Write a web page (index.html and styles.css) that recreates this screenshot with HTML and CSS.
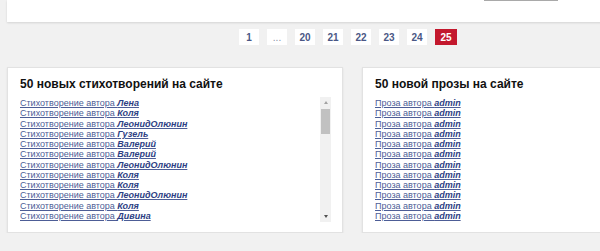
FILE: index.html
```html
<!DOCTYPE html>
<html lang="ru">
<head>
    <meta charset="UTF-8">
    <meta name="viewport" content="width=device-width, initial-scale=1.0">
    <title>Новые произведения</title>
    <link rel="stylesheet" href="styles.css">
</head>
<body>
    <div class="page">
        <div class="top-card">
            <span class="top-button"></span>
        </div>

        <div class="pager">
            <a href="#" class="page-link">1</a>
            <span class="page-link dots">...</span>
            <a href="#" class="page-link">20</a>
            <a href="#" class="page-link">21</a>
            <a href="#" class="page-link">22</a>
            <a href="#" class="page-link">23</a>
            <a href="#" class="page-link">24</a>
            <span class="page-link current">25</span>
        </div>

        <div class="columns">
            <div class="card">
                <h2>50 новых стихотворений на сайте</h2>
                <div class="list-wrap">
                    <ul class="list">
                        <li><a href="#">Стихотворение автора <b>Лена</b></a></li>
                        <li><a href="#">Стихотворение автора <b>Коля</b></a></li>
                        <li><a href="#">Стихотворение автора <b>ЛеонидОлюнин</b></a></li>
                        <li><a href="#">Стихотворение автора <b>Гузель</b></a></li>
                        <li><a href="#">Стихотворение автора <b>Валерий</b></a></li>
                        <li><a href="#">Стихотворение автора <b>Валерий</b></a></li>
                        <li><a href="#">Стихотворение автора <b>ЛеонидОлюнин</b></a></li>
                        <li><a href="#">Стихотворение автора <b>Коля</b></a></li>
                        <li><a href="#">Стихотворение автора <b>Коля</b></a></li>
                        <li><a href="#">Стихотворение автора <b>ЛеонидОлюнин</b></a></li>
                        <li><a href="#">Стихотворение автора <b>Коля</b></a></li>
                        <li><a href="#">Стихотворение автора <b>Дивина</b></a></li>
                    </ul>
                    <div class="scrollbar">
                        <span class="arrow up"></span>
                        <span class="thumb"></span>
                        <span class="track"></span>
                        <span class="arrow down"></span>
                    </div>
                </div>
            </div>

            <div class="card">
                <h2>50 новой прозы на сайте</h2>
                <div class="list-wrap">
                    <ul class="list">
                        <li><a href="#">Проза автора <b>admin</b></a></li>
                        <li><a href="#">Проза автора <b>admin</b></a></li>
                        <li><a href="#">Проза автора <b>admin</b></a></li>
                        <li><a href="#">Проза автора <b>admin</b></a></li>
                        <li><a href="#">Проза автора <b>admin</b></a></li>
                        <li><a href="#">Проза автора <b>admin</b></a></li>
                        <li><a href="#">Проза автора <b>admin</b></a></li>
                        <li><a href="#">Проза автора <b>admin</b></a></li>
                        <li><a href="#">Проза автора <b>admin</b></a></li>
                        <li><a href="#">Проза автора <b>admin</b></a></li>
                        <li><a href="#">Проза автора <b>admin</b></a></li>
                        <li><a href="#">Проза автора <b>admin</b></a></li>
                    </ul>
                </div>
            </div>
        </div>
    </div>
</body>
</html>
```

FILE: styles.css
```css
body {
    margin: 0;
    background-color: #f1f1f1;
    font-family: 'Liberation Sans', Arial, sans-serif;
    overflow: hidden;
}
.page {
    width: 691px;
    padding-left: 7px;
}
.top-card {
    height: 22px;
    background: white;
    box-shadow: 0 1px 2px rgba(0, 0, 0, 0.12);
}
.top-button {
    display: block;
    margin-left: 477px;
    width: 74px;
    height: 1px;
    background-color: #a9a9a9;
}
.pager {
    display: flex;
    gap: 8px;
    margin: 7px 0 0 232px;
    height: 16px;
}
.page-link {
    display: flex;
    align-items: center;
    justify-content: center;
    min-width: 18px;
    height: 16px;
    padding: 0 1px;
    background: white;
    color: #4a5785;
    font-size: 10px;
    font-weight: bold;
    text-decoration: none;
}
.page-link.dots {
    color: #8a8fa8;
    font-weight: normal;
}
.page-link.current {
    background-color: #c3182d;
    color: white;
    min-width: 20px;
}
.columns {
    display: flex;
    gap: 19px;
    margin-top: 22px;
}
.card {
    width: 336px;
    height: 166px;
    box-sizing: border-box;
    background: white;
    border: 1px solid #e2e2e2;
    box-shadow: 0 1px 2px rgba(0, 0, 0, 0.08);
    padding: 9px 11px 0 12px;
}
.card h2 {
    margin: 0 0 6px;
    font-size: 12px;
    line-height: 14px;
    color: #111;
}
.list-wrap {
    display: flex;
    height: 125px;
}
.list {
    flex: 1;
    list-style: none;
    margin: 0;
    padding: 1px 0 0;
    overflow: hidden;
    font-size: 9px;
    line-height: 10.25px;
}
.list a {
    color: #4d5d96;
}
.list b {
    font-style: italic;
    color: #2e3f84;
}
.scrollbar {
    width: 11px;
    display: flex;
    flex-direction: column;
    background-color: #f1f1f1;
}
.arrow {
    height: 11px;
    display: flex;
    align-items: center;
    justify-content: center;
}
.arrow::before {
    content: "";
    border-left: 2.5px solid transparent;
    border-right: 2.5px solid transparent;
}
.arrow.up::before {
    border-bottom: 3px solid #a3a3a3;
}
.arrow.down::before {
    border-top: 3px solid #505050;
}
.thumb {
    height: 25px;
    margin: 1px 1px 0;
    background-color: #c1c1c1;
}
.track {
    flex: 1;
}
```
